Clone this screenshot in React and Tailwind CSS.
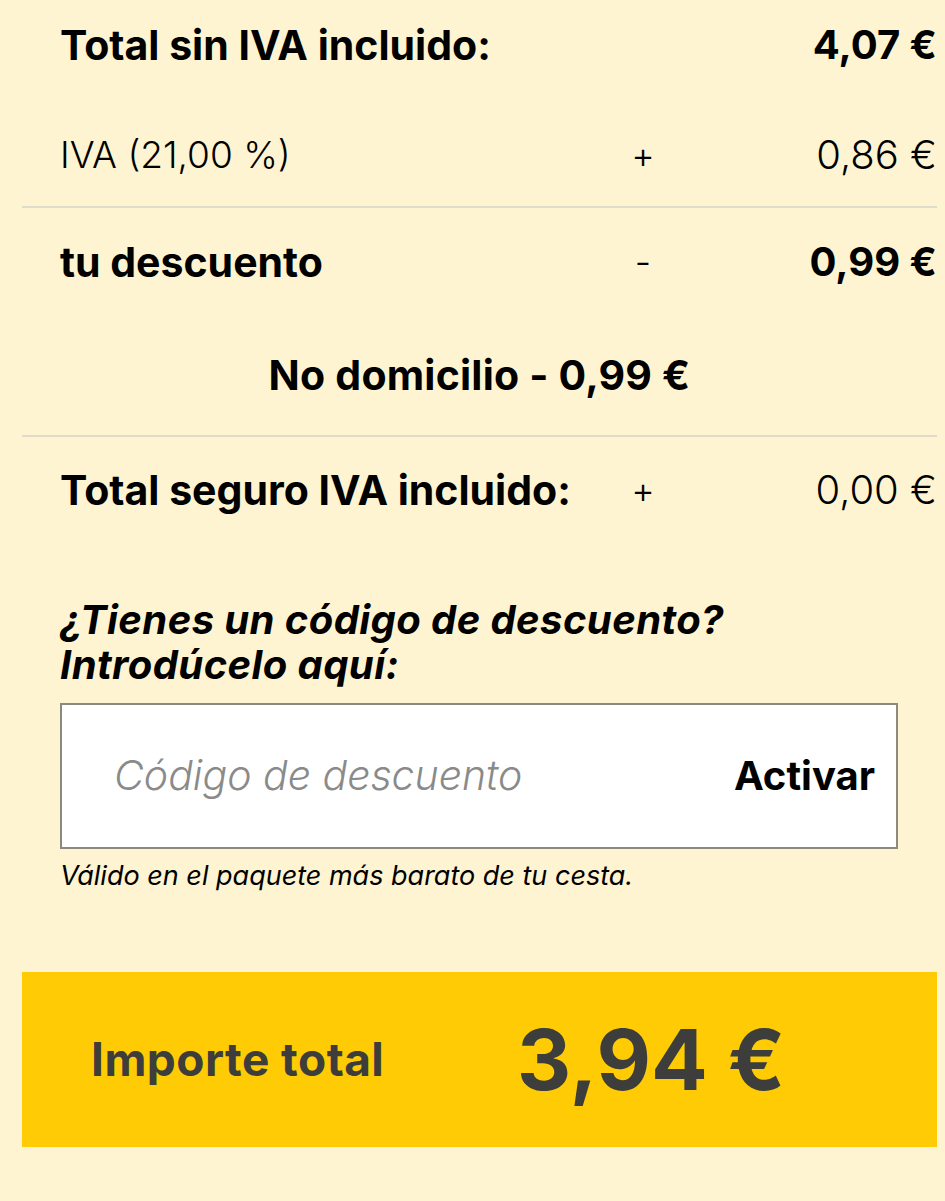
const font = { fontFamily: '"Inter", "Noto Sans", sans-serif' };

function Row({ label, sign, value, labelBold, valueBold, className = "" }) {
  return (
    <div className={`grid grid-cols-[1fr_40px_274px] items-center pl-[38px] leading-[48px] text-black ${className}`}>
      <span className={labelBold ? "font-bold text-[41px]" : "font-light text-[37px]"}>{label}</span>
      <span className="text-center font-light text-[36px]">{sign}</span>
      <span className={`text-right ${valueBold ? "font-bold text-[40px]" : "font-light text-[40px]"}`}>{value}</span>
    </div>
  );
}

export default function App() {
  return (
    <div style={font} className="bg-[#fef4d1] min-h-[1201px] overflow-hidden">
      <div className="ml-[22px] mr-[8px]">
        <Row className="pt-[21px]" label="Total sin IVA incluido:" value="4,07 €" labelBold valueBold />
        <Row className="pt-[62px] pb-[27px]" label="IVA (21,00 %)" sign="+" value="0,86 €" />
        <div className="h-[2px] bg-[#e0dccb]" />
        <Row className="pt-[30px]" label="tu descuento" sign="-" value="0,99 €" labelBold valueBold />
        <p className="mt-[65px] text-center font-bold text-[41px] tracking-[0.005em] leading-[48px] text-black">
          No domicilio - 0,99 €
        </p>
        <div className="mt-[36px] h-[2px] bg-[#e0dccb]" />
        <Row className="pt-[29px]" label="Total seguro IVA incluido:" sign="+" value="0,00 €" labelBold />

        <h3 className="mt-[83px] pl-[38px] font-bold italic text-[40px] tracking-[0.01em] leading-[45px] text-black">
          ¿Tienes un código de descuento?
          <br />
          Introdúcelo aquí:
        </h3>

        <div className="mt-[16px] ml-[38px] mr-[39px] h-[146px] bg-white border-2 border-[#8c8a80] flex items-center pl-[52px] pr-[21px]">
          <input
            type="text"
            placeholder="Código de descuento"
            className="flex-1 min-w-0 bg-transparent outline-none italic font-light text-[41px] text-[#222] placeholder:text-[#8a8a8a]"
          />
          <button className="font-bold text-[40px] text-black">Activar</button>
        </div>

        <p className="mt-[12px] pl-[38px] italic text-[27px] leading-[30px] text-black">
          Válido en el paquete más barato de tu cesta.
        </p>

        <div className="mt-[81px] h-[175px] bg-[#fecb05] flex items-center pl-[69px] text-[#3d3d3b]">
          <span className="w-[426px] shrink-0 font-bold text-[46px] tracking-[0.01em]">Importe total</span>
          <span className="font-bold text-[84px] leading-none">3,94 €</span>
        </div>
      </div>
    </div>
  );
}
